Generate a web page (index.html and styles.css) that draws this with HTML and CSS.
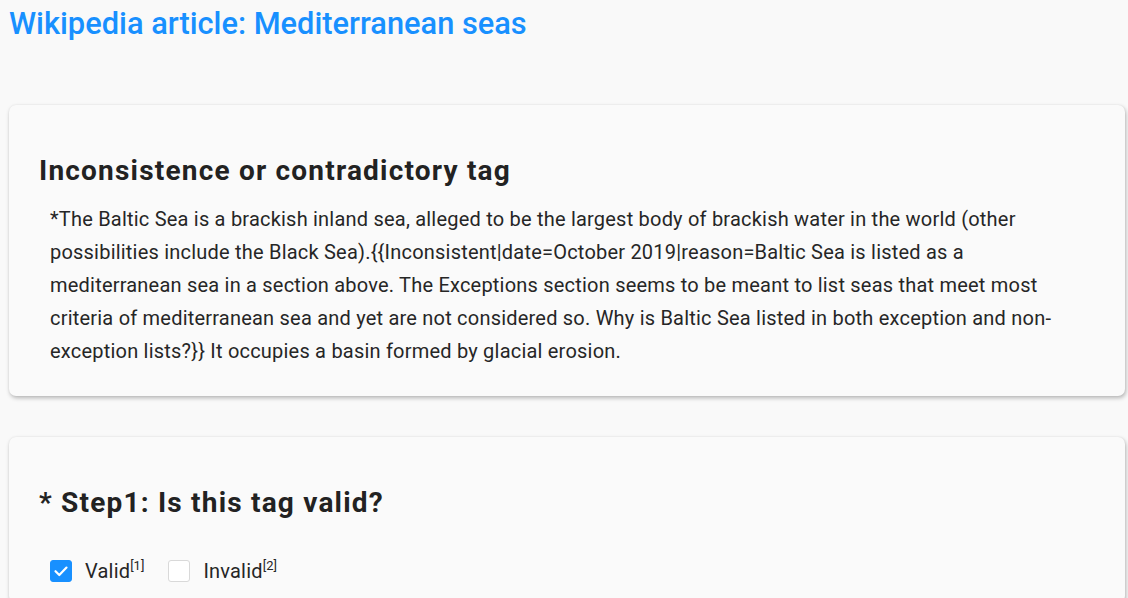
FILE: index.html
```html
<!DOCTYPE html>
<html>
<head>
<meta charset="utf-8">
<link rel="stylesheet" href="styles.css">
</head>
<body>
<div class="page">
  <h1 class="title">Wikipedia article: Mediterranean seas</h1>
  <section class="card card-tag">
    <h2 class="card-heading">Inconsistence or contradictory tag</h2>
    <p class="tag-text">*The Baltic Sea is a brackish inland sea, alleged to be the largest body of brackish water in the world (other possibilities include the Black Sea).{{Inconsistent|date=October 2019|reason=Baltic Sea is listed as a mediterranean sea in a section above. The Exceptions section seems to be meant to list seas that meet most criteria of mediterranean sea and yet are not considered so. Why is Baltic Sea listed in both exception and non-exception lists?}} It occupies a basin formed by glacial erosion.</p>
  </section>
  <section class="card card-step">
    <h2 class="card-heading">* Step1: Is this tag valid?</h2>
    <div class="options">
      <label class="option">
        <span class="box checked">
          <svg viewBox="0 0 22 22" width="22" height="22"><path d="M5.5 11.2 L9.3 15 L16.5 7.6" fill="none" stroke="#fff" stroke-width="2.2" stroke-linecap="round" stroke-linejoin="round"/></svg>
        </span>
        <span class="label">Valid<sup>[1]</sup></span>
      </label>
      <label class="option">
        <span class="box"></span>
        <span class="label">Invalid<sup>[2]</sup></span>
      </label>
    </div>
  </section>
</div>
</body>
</html>
```
FILE: styles.css
```css
html, body {
  margin: 0;
  padding: 0;
  background: #f9f9f9;
  font-family: Roboto, "Noto Sans", sans-serif;
  color: #262626;
}
.page {
  padding: 0 3px 0 9px;
}
.title {
  margin: 0;
  padding-top: 4px;
  font-size: 30.8px;
  font-weight: 500;
  line-height: 40px;
  color: #1890ff;
}
.card {
  background: #fafafa;
  border-radius: 7px;
  box-shadow: 1px 2px 4px rgba(0,0,0,0.28), 0 0 2px rgba(0,0,0,0.06);
}
.card-tag {
  margin-top: 61px;
  padding: 46px 30px 28px 30px;
}
.card-step {
  margin-top: 41px;
  padding: 46px 30px 20px 30px;
}
.card-heading {
  margin: 0;
  font-size: 28px;
  font-weight: 700;
  letter-spacing: 1.2px;
  line-height: 40px;
  color: #222;
}
.tag-text {
  margin: 12px 0 0 11px;
  font-size: 20px;
  letter-spacing: 0.21px;
  line-height: 33px;
  color: #262626;
}
.options {
  display: flex;
  gap: 24px;
  margin: 36px 0 0 11px;
}
.option {
  display: flex;
  align-items: center;
  gap: 13px;
  font-size: 20px;
  letter-spacing: 0.2px;
}
.box {
  width: 22px;
  height: 22px;
  box-sizing: border-box;
  border: 1px solid #d9d9d9;
  border-radius: 3px;
  background: #fff;
  display: flex;
}
.box.checked {
  background: #1890ff;
  border-color: #1890ff;
}
.box svg {
  margin: -1px;
}
.label sup {
  font-size: 13px;
  line-height: 0;
  vertical-align: 0;
  position: relative;
  top: -8px;
  letter-spacing: 0;
}
```
